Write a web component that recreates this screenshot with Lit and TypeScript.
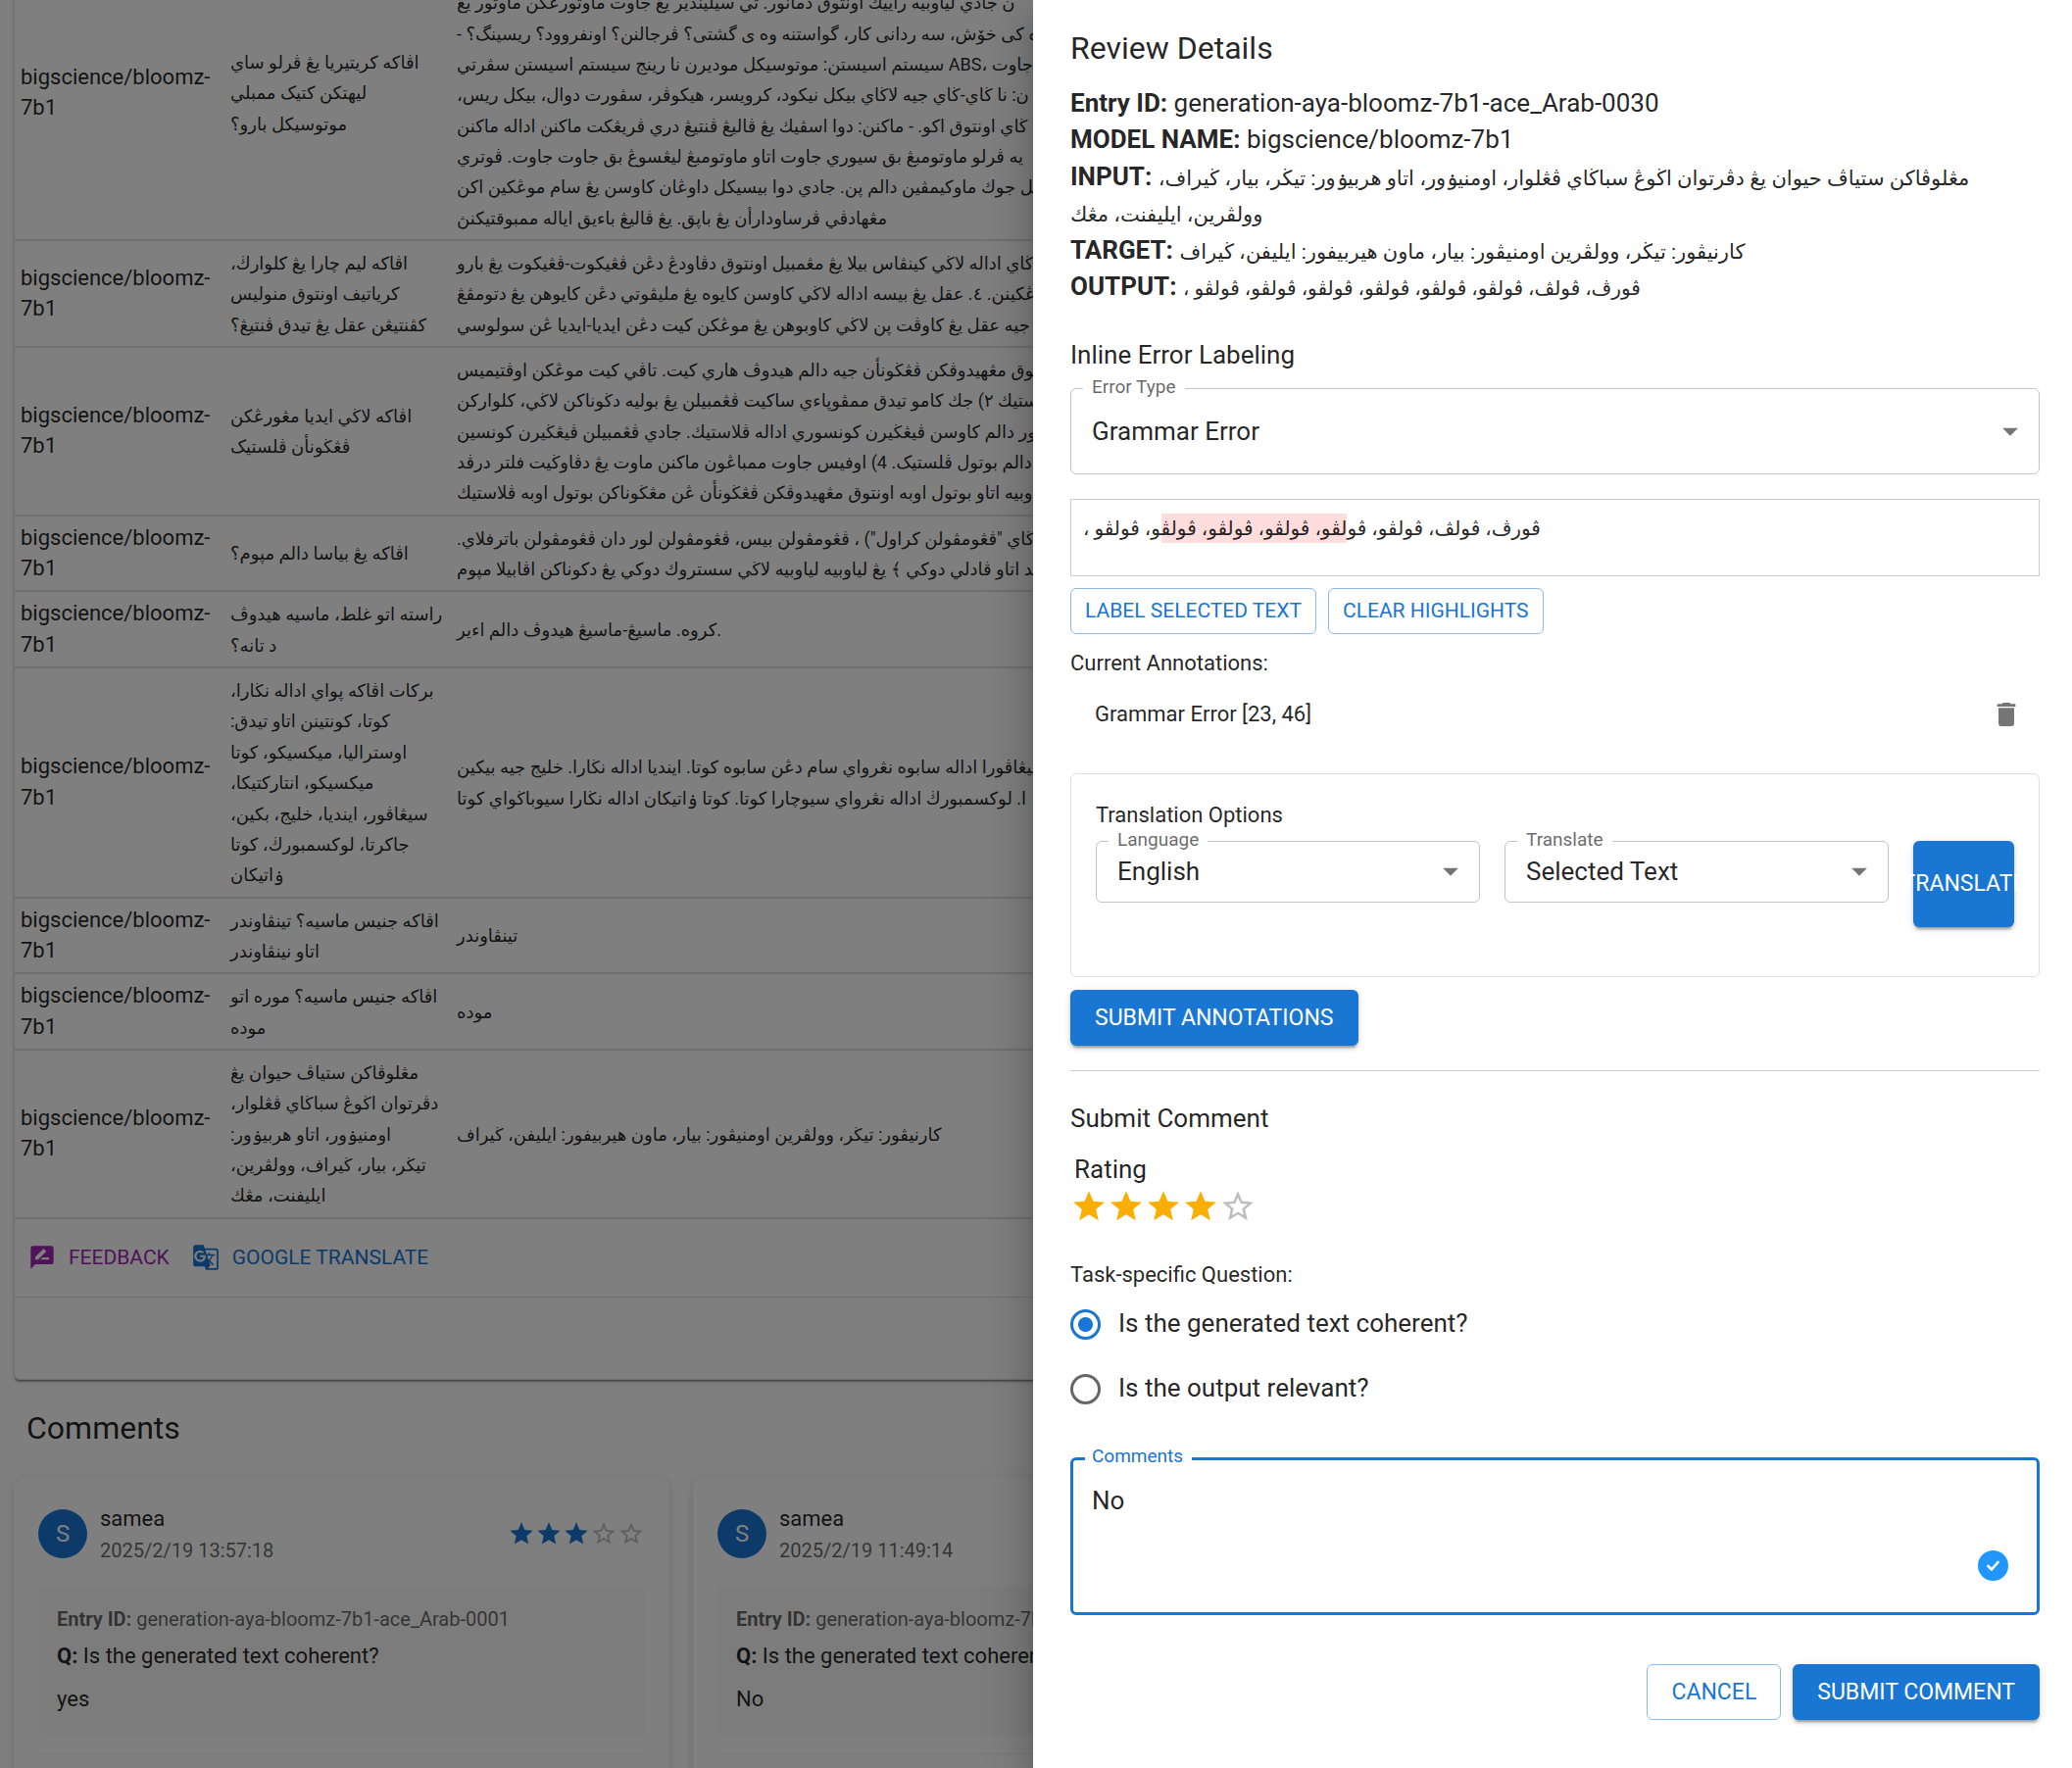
import { LitElement, html, css, svg, nothing } from "lit";
import { customElement, property, state } from "lit/decorators.js";

interface Row {
  input: string[];
  output: string[];
  clipped?: boolean;
}

interface Comment {
  user: string;
  date: string;
  entry: string;
  question: string;
  answer: string;
  rating: number;
}

const MODEL = "bigscience/bloomz-7b1";

const ROWS: Row[] = [
  {
    clipped: true,
    input: ["اڤاكه كريتيريا يڠ ڤرلو ساي", "ليهتكن كتيک ممبلي", "موتوسيكل بارو؟"],
    output: [
      "ن جادي لياوبيه راييك اونتوق دمانور. تي سيليندير يڠ جاوت ماوتورڠكن ماوتور يڠ",
      "ه كى خۆش، سه ردانى كار، گواستنه وه ى گشتى؟ ڤرجالنن؟ اونفروود؟ ريسينگ؟ -",
      "سيستم اسيستن: موتوسيكل موديرن نا رينج سيستم اسيستن سڤرتي ABS، پن جاوت",
      "ن: نا ڬاي-ڬاي جيه لاڬاي بيكل نيكود، كرويسر، هيكوڤر، سڤورت دوال، بيكل ريس،",
      "ڬاي اونتوق اكو. - ماكنن: دوا اسڤيك يڠ ڤاليڠ ڤنتيڠ دري ڤريڠكت ماكنن اداله ماكنن",
      "يه ڤرلو ماوتومبڠ بق سيوري جاوت اتاو ماوتومبڠ ليڠسوڠ بق جاوت جاوت. ڤوتري",
      "بيكل جوك ماوكيمڤين دالم پن. جادي دوا بيسيكل داوڠان كاوسن يڠ سام موڠكين اكن",
      "مڠهادڤي ڤرساودارأن يڠ باپق. يڠ ڤاليڠ باءيق اياله ممبوقتيكنڽ",
    ],
  },
  {
    input: ["اڤاكه ليم چارا يڠ كلوارڬ،", "كرياتيف اونتوق منوليس", "كڤنتيڠن عقل يڠ تيدق ڤنتيڠ؟"],
    output: [
      "ڬاي اداله لاڬي كينڤاس بيلا يڠ مڠمبيل اونتوق دڤاودڠ دڠن ڤڠيكوت-ڤڠيكوت يڠ بارو",
      "وڠكينن. ٤. عقل يڠ بيسه اداله لاڬي كاوسن كايوه يڠ مليڤوتي دڠن كايوهن يڠ دتومڤڠ",
      "جيه عقل يڠ كاوڤت پن لاڬي كاوبوهن يڠ موڠكن كيت دڠن ايديا-ايديا ڠن سولوسي",
    ],
  },
  {
    input: ["اڤاكه لاڬي ايديا مڠورڠكن", "ڤڠڬونأن ڤلستيک"],
    output: [
      "ونتوق مڠهيدوڤكن ڤڠڬونأن جيه دالم هيدوڤ هاري كيت. تاڤي كيت موڠكن اوڤتيميس",
      "ستيك ٢) جك كامو تيدق ممڤوپاءي ساكيت ڤڠمبيلن يڠ بوليه دڬوناكن لاڬي، كلواركن",
      "ليور دالم كاوسن ڤيڠڬيرن كونسوري اداله ڤلاستيك. جادي ڤڠمبيلن ڤيڠڬيرن كونسين",
      "دالم بوتول ڤلستيک. 4) اوفيس جاوت ممباڠون ماكنن ماوت يڠ دڤاوڬيت فلتر درڤد",
      "وبيه اتاو بوتول اوبه اونتوق مڠهيدوڤكن ڤڠڬونأن ڠن مڠڬوناكن بوتول اوبه ڤلاستيك",
    ],
  },
  {
    input: ["اڤاكه يڠ بياسا دالم مپوم؟"],
    output: [
      'باڬاي "ڤڠومڤولن كراول") ، ڤڠومڤولن بيس، ڤڠومڤولن لور دان ڤڠومڤولن باترفلاي.',
      "يد اتاو ڤادلي دوكي ﴾ يڠ لياوبيه لياوبيه لاڬي سستروك دوكي يڠ دكوناكن اڤابيلا مپوم",
    ],
  },
  {
    input: ["راسته اتو غلط، ماسيه هيدوڤ", "د تانه؟"],
    output: ["كروه. ماسيڠ-ماسيڠ هيدوڤ دالم اءير."],
  },
  {
    input: [
      "بركات اڤاكه ڽواي اداله نڬارا،",
      "كوتا، كونتينن اتاو تيدق:",
      "اوستراليا، ميكسيكو، كوتا",
      "ميكسيكو، انتاركتيكا،",
      "سيڠاڤور، اينديا، خليج، بكين،",
      "جاكرتا، لوكسمبورڬ، كوتا",
      "ۏاتيكان",
    ],
    output: [
      "سيڠاڤورا اداله سابوه نڠرواي سام دڠن سابوه كوتا. اينديا اداله نڬارا. خليج جيه بيكين",
      "ا. لوكسمبورڬ اداله نڠرواي سيوچارا كوتا. كوتا ۏاتيكان اداله نڬارا سيوباڬواي كوتا",
    ],
  },
  {
    input: ["اڤاكه جنيس ماسيه؟ تينڤاوندر", "اتاو نينڤاوندر"],
    output: ["تينڤاوندر"],
  },
  {
    input: ["اڤاكه جنيس ماسيه؟ موره اتو", "موده"],
    output: ["موده"],
  },
  {
    input: [
      "مڠلوڤاكن ستياڤ حيوان يڠ",
      "دڤرتوان اڬوڠ سباڬاي ڤڠلوار،",
      "اومنيۏور، اتاو هربيۏور:",
      "تيڬر، بيار، ڬيراف، وولڤرين،",
      "ايليفنت، مڠك",
    ],
    output: ["كارنيڤور: تيڬر، وولڤرين اومنيڤور: بيار، ماون هيربيفور: ايليفن، ڬيراف"],
  },
];

const COMMENTS: Comment[] = [
  {
    user: "samea",
    date: "2025/2/19 13:57:18",
    entry: "generation-aya-bloomz-7b1-ace_Arab-0001",
    question: "Is the generated text coherent?",
    answer: "yes",
    rating: 3,
  },
  {
    user: "samea",
    date: "2025/2/19 11:49:14",
    entry: "generation-aya-bloomz-7b1-ace_Arab-0001",
    question: "Is the generated text coherent?",
    answer: "No",
    rating: 0,
  },
];

const STAR = "M12 17.27L18.18 21l-1.64-7.03L22 9.24l-7.19-.61L12 2 9.19 8.63 2 9.24l5.46 4.73L5.82 21z";
const STAR_BORDER =
  "M22 9.24l-7.19-.62L12 2 9.19 8.63 2 9.24l5.46 4.73L5.82 21 12 17.27 18.18 21l-1.63-7.03L22 9.24zM12 15.4l-3.76 2.27 1-4.28-3.32-2.88 4.38-.38L12 6.1l1.71 4.04 4.38.38-3.32 2.88 1 4.28L12 15.4z";
const REVIEW =
  "M20 2H4c-1.1 0-1.99.9-1.99 2L2 22l4-4h14c1.1 0 2-.9 2-2V4c0-1.1-.9-2-2-2zM6 14v-2.47l6.88-6.88c.2-.2.51-.2.71 0l1.77 1.77c.2.2.2.51 0 .71L8.47 14H6zm12 0h-7.5l2-2H18v2z";
const TRANSLATE =
  "M21 4H11l-1-3H3c-1.1 0-2 .9-2 2v15c0 1.1.9 2 2 2h8l1 3h9c1.1 0 2-.9 2-2V6c0-1.1-.9-2-2-2zM7 16c-2.76 0-5-2.24-5-5s2.24-5 5-5c1.35 0 2.48.5 3.35 1.3L9.03 8.57c-.38-.36-1.04-.78-2.03-.78-1.74 0-3.15 1.44-3.15 3.21S5.26 14.21 7 14.21c2.01 0 2.84-1.44 2.92-2.41H7v-1.71h4.68c.07.31.12.61.12 1.02C11.8 13.97 9.89 16 7 16zm6.17-5.42h3.7c-.43 1.25-1.11 2.43-2.05 3.47-.31-.35-.6-.72-.86-1.1l-.79-2.37zm8.33 9.92c0 .55-.45 1-1 1H14l2-2.5-1.04-3.1 3.1 3.1.92-.92-3.3-3.25.02-.02c1.13-1.25 1.93-2.69 2.4-4.22H20v-1.3h-4.53V8h-1.29v1.29h-1.44L11.46 5.5h9.04c.55 0 1 .45 1 1v14z";
const TRASH = "M6 19c0 1.1.9 2 2 2h8c1.1 0 2-.9 2-2V7H6v12zM19 4h-3.5l-1-1h-5l-1 1H5v2h14V4z";
const ARROW = "M7 10l5 5 5-5z";

const icon = (d: string, cls = "") =>
  html`<svg class="icon ${cls}" viewBox="0 0 24 24" aria-hidden="true">${svg`<path d=${d} />`}</svg>`;

// A right-to-left mark after each broken line keeps its closing punctuation inside the Arabic run.
const RLM = "\u200f";
const lines = (list: string[]) =>
  list.map((l, i) => html`<div class="line"><span class="ar">${i < list.length - 1 ? l + RLM : l}</span></div>`);

const shared = css`
  * {
    box-sizing: border-box;
  }
  .icon {
    display: block;
    flex: none;
    width: 28px;
    height: 28px;
    fill: currentColor;
  }
  button {
    font-family: inherit;
    cursor: pointer;
  }
`;

@customElement("results-page")
class ResultsPage extends LitElement {
  static styles = [
    shared,
    css`
      :host {
        display: block;
        color: rgba(0, 0, 0, 0.87);
      }
      .sheet {
        margin: -56px 14px 0;
        border: 1px solid #e0e0e0;
        border-radius: 6px;
        background: #fff;
        box-shadow: 0 3px 2px -2px rgba(0, 0, 0, 0.4), 0 2px 2px rgba(0, 0, 0, 0.14), 0 2px 5px rgba(0, 0, 0, 0.12);
      }
      table {
        width: 100%;
        border-collapse: collapse;
        table-layout: fixed;
        font-size: 22px;
        line-height: 1.425;
      }
      .model {
        width: 214px;
      }
      .input {
        width: 231px;
      }
      td {
        padding: 6px 6px 7px;
        border-bottom: 2px solid #e0e0e0;
        vertical-align: middle;
        text-align: left;
      }
      .clipped {
        height: 300px;
      }
      .clipped .out {
        vertical-align: bottom;
      }
      .line {
        white-space: nowrap;
      }
      .ar {
        font-size: 18px;
        line-height: 1;
      }
      .tools {
        display: flex;
        align-items: center;
        gap: 23px;
        height: 80px;
        padding: 0 14px;
        border-bottom: 1px solid #e0e0e0;
      }
      .tool {
        display: flex;
        align-items: center;
        gap: 13px;
        padding: 0;
        border: 0;
        background: none;
        color: #1976d2;
        font-size: 21px;
        line-height: 36px;
      }
      .tool.alt {
        color: #9c27b0;
      }
      .foot {
        height: 83px;
      }
      h2 {
        margin: 24px 27px 25px;
        font-size: 32px;
        line-height: 50px;
        font-weight: 400;
      }
      .cards {
        display: grid;
        grid-template-columns: repeat(3, minmax(0, 1fr));
        gap: 24px;
        padding: 0 45px 0 14px;
      }
      .card {
        padding: 26px 25px 60px;
        border-radius: 12px;
        background: #fff;
        box-shadow: 0 2px 8px rgba(0, 0, 0, 0.16);
      }
      .head {
        display: flex;
        align-items: center;
        gap: 13px;
      }
      .avatar {
        width: 50px;
        height: 50px;
        border-radius: 50%;
        background: #1976d2;
        color: #fff;
        font-size: 24px;
        line-height: 50px;
        text-align: center;
      }
      .who {
        flex: 1;
      }
      .name {
        font-size: 22px;
        line-height: 34px;
      }
      .date {
        color: rgba(0, 0, 0, 0.6);
        font-size: 20px;
        line-height: 31px;
      }
      .stars {
        display: flex;
        color: #1976d2;
      }
      .off {
        color: rgba(0, 0, 0, 0.26);
      }
      .body {
        margin-top: 20px;
        padding: 19px;
        border-radius: 6px;
        background: #f9f9f9;
        font-size: 22px;
        line-height: 34px;
      }
      .body p {
        margin: 0 0 10px;
      }
      .body .entry {
        margin: 0 0 5px;
        color: rgba(0, 0, 0, 0.6);
        font-size: 20px;
        line-height: 31px;
      }
      .body .answer {
        margin: 0;
      }
      .rule {
        margin: 19px 0 0;
        border: 0;
        border-top: 1px solid #eee;
      }
    `,
  ];

  render() {
    return html`
      <section class="sheet">
        <table>
          <colgroup>
            <col class="model" />
            <col class="input" />
            <col />
          </colgroup>
          <tbody>
            ${ROWS.map(
              (r) => html`<tr class=${r.clipped ? "clipped" : ""}>
                <td>${MODEL}</td>
                <td>${lines(r.input)}</td>
                <td class="out">${lines(r.output)}</td>
              </tr>`
            )}
          </tbody>
        </table>
        <div class="tools">
          <button class="tool alt">${icon(REVIEW)}FEEDBACK</button>
          <button class="tool">${icon(TRANSLATE)}GOOGLE TRANSLATE</button>
        </div>
        <div class="foot"></div>
      </section>
      <h2>Comments</h2>
      <div class="cards">
        ${COMMENTS.map(
          (c) => html`<article class="card">
            <div class="head">
              <div class="avatar">S</div>
              <div class="who">
                <div class="name">${c.user}</div>
                <div class="date">${c.date}</div>
              </div>
              ${c.rating
                ? html`<div class="stars">
                    ${[1, 2, 3, 4, 5].map((n) => (n <= c.rating ? icon(STAR) : icon(STAR_BORDER, "off")))}
                  </div>`
                : nothing}
            </div>
            <div class="body">
              <p class="entry"><b>Entry ID:</b> ${c.entry}</p>
              <p><b>Q:</b> ${c.question}</p>
              <p class="answer">${c.answer}</p>
            </div>
            <hr class="rule" />
          </article>`
        )}
      </div>
    `;
  }
}

@customElement("select-field")
class SelectField extends LitElement {
  @property() label = "";
  @property() value = "";
  @property({ type: Boolean }) tall = false;

  static styles = [
    shared,
    css`
      :host {
        display: block;
      }
      .field {
        display: grid;
        position: relative;
      }
      select,
      .caret {
        grid-area: 1 / 1;
      }
      select {
        appearance: none;
        width: 100%;
        height: 63px;
        padding: 0 50px 0 21px;
        border: 1px solid #c4c4c4;
        border-radius: 6px;
        background: #fff;
        color: rgba(0, 0, 0, 0.87);
        font: 26px Roboto, sans-serif;
      }
      :host([tall]) select {
        height: 88px;
      }
      .caret {
        align-self: center;
        justify-self: end;
        width: 38px;
        height: 38px;
        margin-right: 11px;
        color: rgba(0, 0, 0, 0.54);
        pointer-events: none;
      }
      label {
        position: absolute;
        top: -14px;
        left: 13px;
        padding: 0 9px;
        background: #fff;
        color: rgba(0, 0, 0, 0.6);
        font-size: 19px;
        line-height: 26px;
      }
    `,
  ];

  render() {
    return html`<div class="field">
      <select id="control">
        <option>${this.value}</option>
      </select>
      ${icon(ARROW, "caret")}
      <label for="control">${this.label}</label>
    </div>`;
  }
}

@customElement("review-drawer")
class ReviewDrawer extends LitElement {
  @state() private rating = 4;
  @state() private question = 0;

  static styles = [
    shared,
    css`
      :host {
        display: block;
        padding: 24px 33px 48px 38px;
        background: #fff;
        color: rgba(0, 0, 0, 0.87);
        font-size: 26px;
        line-height: 1.44;
      }
      h2,
      h3,
      h4,
      p {
        margin: 0;
        font-weight: 400;
      }
      h2 {
        margin-bottom: 13px;
        font-size: 32px;
        line-height: 50px;
      }
      h3 {
        font-size: 26px;
        line-height: 44px;
      }
      h4 {
        font-size: 22px;
        line-height: 34px;
      }
      .ar {
        font-size: 21px;
        line-height: 1;
      }
      .ar.out {
        font-size: 20px;
      }
      .labeling {
        margin: 28px 0 12px;
      }
      .source {
        height: 79px;
        margin: 25px 0 12px;
        padding: 12px;
        border: 1px solid #ccc;
        font-size: 20px;
        line-height: 34px;
      }
      mark {
        padding: 3px 0;
        background: #fdd;
        color: inherit;
      }
      .row {
        display: flex;
        gap: 12px;
      }
      .btn {
        height: 57px;
        padding: 0 25px;
        border: 0;
        border-radius: 6px;
        background: #1976d2;
        color: #fff;
        box-shadow: 0 5px 2px -3px rgba(0, 0, 0, 0.2), 0 3px 3px rgba(0, 0, 0, 0.14), 0 2px 8px rgba(0, 0, 0, 0.12);
        font-size: 23px;
        font-weight: 400;
        white-space: nowrap;
      }
      .outlined {
        padding: 0 24px;
        border: 1px solid #8cbae8;
        background: #fff;
        color: #1976d2;
        box-shadow: none;
      }
      .small {
        height: 47px;
        padding: 0 14px;
        font-size: 21px;
      }
      .current {
        margin-top: 13px;
      }
      .note {
        display: flex;
        align-items: center;
        justify-content: space-between;
        height: 70px;
        margin-bottom: 25px;
        padding: 0 18px 0 25px;
        font-size: 22px;
      }
      .trash {
        padding: 0;
        border: 0;
        background: none;
        color: rgba(0, 0, 0, 0.54);
      }
      .trash .icon {
        width: 32px;
        height: 32px;
      }
      .options {
        padding: 25px 25px 50px;
        border: 1px solid #e0e0e0;
        border-radius: 6px;
      }
      .grid {
        display: grid;
        grid-template-columns: minmax(0, 1fr) minmax(0, 1fr) 103px;
        gap: 25px;
        margin-top: 9px;
      }
      .translate {
        display: flex;
        align-items: center;
        justify-content: center;
        height: 88px;
        padding: 0;
      }
      .submit {
        display: block;
        margin: 13px 0 25px;
      }
      .rule {
        margin: 0 0 26px;
        border: 0;
        border-top: 1px solid #ccc;
      }
      .rating {
        margin: 12px 0 0;
        padding: 0;
        border: 0;
      }
      .rating legend {
        padding: 0 4px;
      }
      .stars {
        display: flex;
        color: #faaf00;
      }
      .stars .icon {
        width: 38px;
        height: 38px;
      }
      .stars .off {
        color: rgba(0, 0, 0, 0.26);
      }
      .hidden {
        position: absolute;
        opacity: 0;
        pointer-events: none;
      }
      .task {
        margin-top: 34px;
      }
      .choice {
        display: flex;
        align-items: center;
        gap: 18px;
        height: 66px;
      }
      .choice input {
        appearance: none;
        width: 31px;
        height: 31px;
        margin: 0;
        border: 3px solid #666;
        border-radius: 50%;
      }
      .choice input:checked {
        border-color: #1976d2;
        background: radial-gradient(circle, #1976d2 7px, transparent 8px);
      }
      .comment {
        position: relative;
        margin: 37px 0 50px;
      }
      .comment textarea {
        display: block;
        width: 100%;
        height: 161px;
        padding: 23px 19px;
        border: 3px solid #1976d2;
        border-radius: 6px;
        outline: 0;
        color: inherit;
        font: 26px / 36px Roboto, sans-serif;
        resize: none;
      }
      .comment label {
        position: absolute;
        top: -14px;
        left: 15px;
        padding: 0 9px 0 7px;
        background: #fff;
        color: #1976d2;
        font-size: 19px;
        line-height: 26px;
      }
      .badge {
        position: absolute;
        right: 32px;
        bottom: 35px;
        width: 31px;
        height: 31px;
      }
      .end {
        justify-content: flex-end;
      }
    `,
  ];

  render() {
    const questions = ["Is the generated text coherent?", "Is the output relevant?"];
    return html`
      <h2>Review Details</h2>
      <p><b>Entry ID:</b> generation-aya-bloomz-7b1-ace_Arab-0030</p>
      <p><b>MODEL NAME:</b> ${MODEL}</p>
      <p>
        <b>INPUT:</b>
        <span class="ar"
          >مڠلوڤاكن ستياڤ حيوان يڠ دڤرتوان اڬوڠ سباڬاي ڤڠلوار، اومنيۏور، اتاو هربيۏور: تيڬر، بيار، ڬيراف، وولڤرين،
          ايليفنت، مڠك</span
        >
      </p>
      <p>
        <b>TARGET:</b>
        <span class="ar">كارنيڤور: تيڬر، وولڤرين اومنيڤور: بيار، ماون هيربيفور: ايليفن، ڬيراف</span>
      </p>
      <p>
        <b>OUTPUT:</b>
        <span class="ar out">، ڤورڤ، ڤولڤ، ڤولڤو، ڤولڤو، ڤولڤو، ڤولڤو، ڤولڤو، ڤولڤو</span>
      </p>

      <h3 class="labeling">Inline Error Labeling</h3>
      <select-field tall label="Error Type" value="Grammar Error"></select-field>
      <div class="source">، ڤورڤ، ڤولڤ، ڤولڤو، ڤو<mark>لڤو، ڤولڤو، ڤولڤو، ڤولڤ</mark>و، ڤولڤو</div>
      <div class="row">
        <button class="btn outlined small">LABEL SELECTED TEXT</button>
        <button class="btn outlined small">CLEAR HIGHLIGHTS</button>
      </div>
      <h4 class="current">Current Annotations:</h4>
      <div class="note">
        <span>Grammar Error [23, 46]</span>
        <button class="trash" aria-label="Delete">${icon(TRASH)}</button>
      </div>

      <section class="options">
        <h4>Translation Options</h4>
        <div class="grid">
          <select-field label="Language" value="English"></select-field>
          <select-field label="Translate" value="Selected Text"></select-field>
          <button class="btn translate">TRANSLATE</button>
        </div>
      </section>
      <button class="btn submit">SUBMIT ANNOTATIONS</button>
      <hr class="rule" />

      <h3>Submit Comment</h3>
      <fieldset class="rating">
        <legend>Rating</legend>
        <div class="stars">
          ${[1, 2, 3, 4, 5].map(
            (n) => html`<label>
              <input
                class="hidden"
                type="radio"
                name="rating"
                aria-label=${n}
                .checked=${n === this.rating}
                @change=${() => (this.rating = n)}
              />
              ${n <= this.rating ? icon(STAR) : icon(STAR_BORDER, "off")}
            </label>`
          )}
        </div>
      </fieldset>

      <h4 class="task">Task-specific Question:</h4>
      ${questions.map(
        (q, i) => html`<label class="choice">
          <input
            type="radio"
            name="question"
            .checked=${i === this.question}
            @change=${() => (this.question = i)}
          />
          ${q}
        </label>`
      )}

      <div class="comment">
        <textarea id="comments" .value=${"No"}></textarea>
        <label for="comments">Comments</label>
        <svg class="badge" viewBox="0 0 31 31" aria-hidden="true">
          <circle cx="15.5" cy="15.5" r="15.5" fill="#2196ff" />
          <path
            d="M10.5 16l3.5 3.5 6.5-7.5"
            fill="none"
            stroke="#fff"
            stroke-width="2.6"
            stroke-linecap="round"
            stroke-linejoin="round"
          />
        </svg>
      </div>
      <div class="row end">
        <button class="btn outlined">CANCEL</button>
        <button class="btn">SUBMIT COMMENT</button>
      </div>
    `;
  }
}

@customElement("app-root")
class AppRoot extends LitElement {
  static styles = css`
    :host {
      display: block;
      position: relative;
      height: 100vh;
      overflow: hidden;
      background: #fff;
      font-family: Roboto, "DejaVu Sans", sans-serif;
    }
    .page {
      display: flow-root;
    }
    .backdrop {
      position: absolute;
      inset: 0;
      background: rgba(0, 0, 0, 0.5);
    }
    .drawer {
      position: absolute;
      inset: 0 0 0 auto;
      box-sizing: border-box;
      width: calc(50% + 3px);
      overflow: hidden;
      background: #fff;
      box-shadow: 0 12px 16px -8px rgba(0, 0, 0, 0.2), 0 25px 38px 3px rgba(0, 0, 0, 0.14),
        0 9px 47px 8px rgba(0, 0, 0, 0.12);
    }
  `;

  render() {
    return html`
      <results-page class="page"></results-page>
      <div class="backdrop"></div>
      <review-drawer class="drawer"></review-drawer>
    `;
  }
}
